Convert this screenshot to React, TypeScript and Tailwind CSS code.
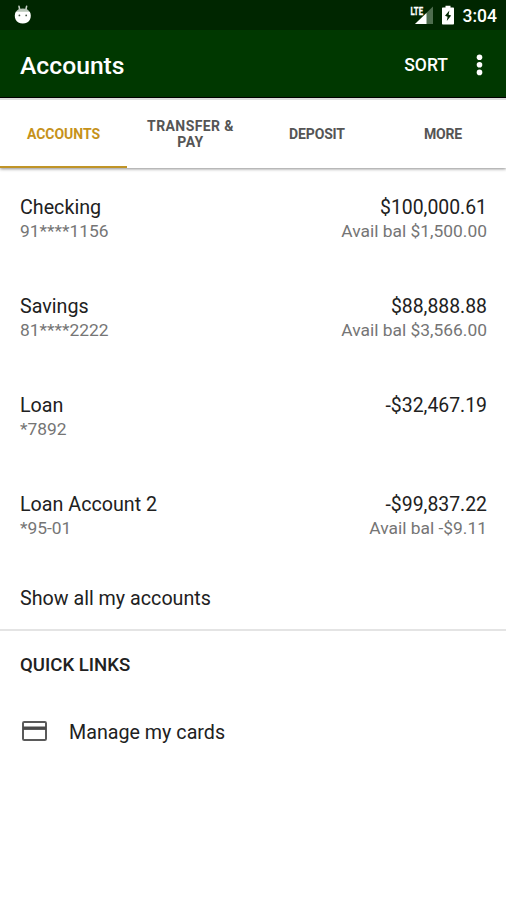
import { useState } from 'react';

const accounts = [
  { name: 'Checking', number: '91****1156', balance: '$100,000.61', available: 'Avail bal $1,500.00' },
  { name: 'Savings', number: '81****2222', balance: '$88,888.88', available: 'Avail bal $3,566.00' },
  { name: 'Loan', number: '*7892', balance: '-$32,467.19', available: '' },
  { name: 'Loan Account 2', number: '*95-01', balance: '-$99,837.22', available: 'Avail bal -$9.11' },
];

const tabs = [
  { label: 'ACCOUNTS', spacing: 'tracking-[-0.05px]' },
  { label: 'TRANSFER & PAY', spacing: 'tracking-[0.4px]' },
  { label: 'DEPOSIT', spacing: 'tracking-[-0.15px]' },
  { label: 'MORE', spacing: 'tracking-[-0.15px]' },
];

const StatusBar = () => (
  <div className="h-[30px] bg-[#002600] flex items-center justify-between pl-[14px] pr-[9px] text-white">
    {/* Android debug icon */}
    <svg width="18" height="20" viewBox="0 0 18 20">
      <path d="M5 1.4 5.8 5M12.6 1.4 11.8 5" stroke="#c8d2c8" strokeWidth="1.6" strokeLinecap="round" />
      <path d="M2 7C3 4.4 5.5 3.4 8.8 3.4S14.6 4.4 15.6 7Z" fill="#b9c6b9" />
      <path d="M1.8 6.8H15.8C17 9 17.2 12 16 14.4C14.8 17 12 18.4 8.8 18.4S2.8 17 1.6 14.4C.4 12 .6 9 1.8 6.8Z" fill="#fff" />
      <circle cx="5.4" cy="10.4" r="0.9" fill="#445544" />
      <circle cx="12.2" cy="10.4" r="0.9" fill="#445544" />
    </svg>
    <div className="flex items-center">
      <svg width="24" height="20" viewBox="0 0 24 20" className="mr-[8px]">
        <path d="M23 1.5V19H5Z" fill="#4f6d4f" />
        <path d="M16.5 8V19H5Z" fill="#fff" />
        <text x="0.5" y="9.6" fontSize="11" fontWeight="700" fontFamily="Roboto, sans-serif" fill="#fff" stroke="#fff" strokeWidth="0.3" textLength="12.5" lengthAdjust="spacingAndGlyphs">LTE</text>
      </svg>
      <svg width="12" height="20" viewBox="0 0 12 20" className="mr-[9px]">
        <path d="M3.5 0.8H8.5V2.6H11C11.6 2.6 12 3 12 3.6V18.4C12 19 11.6 19.4 11 19.4H1C.4 19.4 0 19 0 18.4V3.6C0 3 .4 2.6 1 2.6H3.5Z" fill="#fff" />
        <path d="M7.4 5.6 3 10.8 5.6 11.8 4.8 16 9.2 10.6 6.6 9.8Z" fill="#002600" />
      </svg>
      <span className="text-[17.5px] leading-[30px] pt-[2px] font-medium">3:04</span>
    </div>
  </div>
);

const CardIcon = () => (
  <svg width="25" height="20" viewBox="0 0 25 20" fill="none">
    <rect x="1" y="1" width="23" height="18" rx="1.2" stroke="#5a5a5a" strokeWidth="2" />
    <path d="M1 7.2H24" stroke="#4a4a4a" strokeWidth="3.4" />
  </svg>
);

const App = () => {
  const [activeTab, setActiveTab] = useState('ACCOUNTS');

  return (
    <div className="min-h-screen bg-white font-[Roboto,sans-serif] text-[#212121]">
      <StatusBar />

      <header className="h-[68px] bg-[#003800] border-b border-black flex items-center justify-between pl-[20px] pr-[23px] text-white">
        <h1 className="text-[24.7px] font-medium pt-[5px]">Accounts</h1>
        <div className="flex items-center gap-[28px] pt-[2px]">
          <button className="text-[17.5px] font-medium pt-px cursor-pointer">SORT</button>
          <button aria-label="Menu" className="cursor-pointer">
            <svg width="7" height="22" viewBox="0 0 7 22" fill="#fff">
              <circle cx="3.5" cy="3.2" r="2.8" />
              <circle cx="3.5" cy="10.8" r="2.8" />
              <circle cx="3.5" cy="18.4" r="2.8" />
            </svg>
          </button>
        </div>
      </header>

      <nav className="h-[70px] grid grid-cols-[127px_127px_126px_126px] border-t-2 border-[#dedede] shadow-[0_1px_3px_rgba(0,0,0,0.45)]">
        {tabs.map(({ label, spacing }) => (
          <button
            key={label}
            onClick={() => setActiveTab(label)}
            className={`px-[14px] pt-[2px] text-[14px] leading-[16px] font-bold border-b-2 cursor-pointer ${spacing} ${
              label === activeTab ? 'text-[#c6921a] border-[#c09427]' : 'text-[#555555] border-transparent'
            }`}
          >
            {label}
          </button>
        ))}
      </nav>

      <main>
        <ul className="pt-[2px]">
          {accounts.map((account) => (
            <li key={account.number} className="h-[99px] pl-[20px] pr-[19px] pt-[25px] flex justify-between">
              <div>
                <p className="text-[19.7px] leading-[25px]">{account.name}</p>
                <p className="text-[17.4px] leading-[23px] text-[#757575]">{account.number}</p>
              </div>
              <div className="text-right">
                <p className="text-[19.4px] leading-[25px]">{account.balance}</p>
                <p className="text-[17.4px] leading-[23px] text-[#757575]">{account.available}</p>
              </div>
            </li>
          ))}
        </ul>

        <button className="w-full h-[65px] px-[20px] pt-[2px] text-left text-[19.7px] border-b-2 border-[#e4e4e4] cursor-pointer">
          Show all my accounts
        </button>

        {/* Quick links */}
        <section>
          <h2 className="h-[67px] px-[20px] pt-[2px] flex items-center text-[18.6px] font-medium">QUICK LINKS</h2>
          <a className="h-[66px] pl-[22px] flex items-center gap-[22px] text-[19.7px] cursor-pointer">
            <CardIcon />
            <span className="pt-[3px]">Manage my cards</span>
          </a>
        </section>
      </main>
    </div>
  );
};

export default App;
